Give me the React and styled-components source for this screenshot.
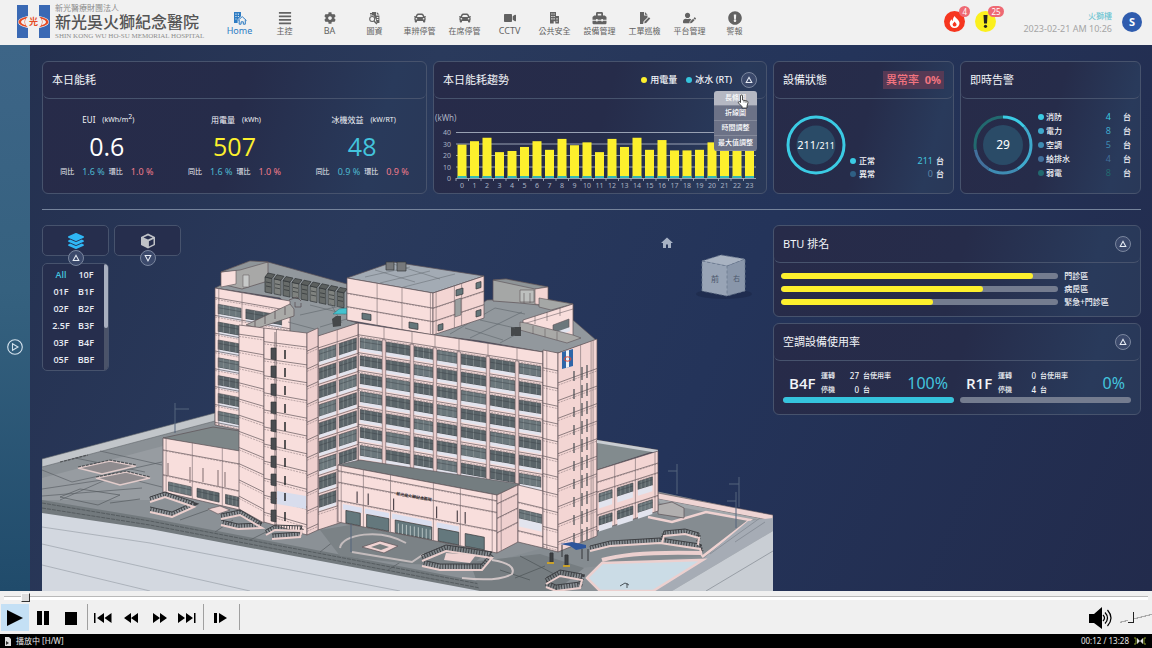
import React from 'react';
import styled, { createGlobalStyle } from 'styled-components';
import {
  FaAlignJustify, FaCog, FaCar, FaVideo, FaToolbox,
  FaUserEdit, FaExclamationCircle, FaLayerGroup,
} from 'react-icons/fa';

const GlobalStyle = createGlobalStyle`
* { box-sizing : border-box ; }
body {
  margin : 0 ;
  background : #26345a ;
  color : #f2f4f8 ;
  font-family : "Noto Sans", "Noto Sans CJK TC", sans-serif ;
  font-size : 8px ;
  line-height : 12px ;
}
button, select, input { font : inherit ; color : inherit ; }
button { border : 0 ; padding : 0 ; background : none ; cursor : pointer ; }
h1, h2, p, ul, dl, dd { margin : 0 ; padding : 0 ; font-weight : 400 ; }
ul { list-style : none ; }
svg { display : block ; }
`

const Page = styled.div`
display : flex ;
flex-direction : column ;
min-height : 100vh ;
`

/* ---------- top bar ---------- */

const TopBar = styled.header`
display : flex ;
align-items : center ;
height : 45px ;
padding : 0 10px 2px 17px ;
background : #f1f1f1 ;
color : #606060 ;
`

const Brand = styled.a`
display : flex ;
align-items : center ;
gap : 5px ;
width : 200px ;
color : inherit ;
text-decoration : none ;
white-space : nowrap ;
`

const BrandText = styled.div`
display : flex ;
flex-direction : column ;
`

const BrandSmall = styled.span`
font-size : 8px ;
line-height : 10px ;
color : #8d8d8d ;
`

const BrandName = styled.h1`
font-size : 16px ;
font-weight : 500 ;
line-height : 19px ;
color : #555 ;
`

const BrandEnglish = styled.span`
font-family : "Liberation Serif", serif ;
font-size : 7px ;
line-height : 8px ;
color : #8d8d8d ;
`

const Nav = styled.nav`
display : flex ;
flex : 1 ;
padding-top : 4px ;
`

const NavItem = styled.a`
display : flex ;
flex-direction : column ;
align-items : center ;
width : 45px ;
font-size : ${p => p.$latin ? '9px' : '8px'} ;
color : ${p => p.$active ? '#2d7cc4' : '#626262'} ;
text-decoration : none ;
white-space : nowrap ;
svg { height : 14px ; }
`

const UserArea = styled.div`
display : flex ;
align-items : center ;
gap : 10px ;
`

const AlertButton = styled.button`
position : relative ;
display : flex ;
align-items : center ;
justify-content : center ;
width : 21px ;
height : 21px ;
border-radius : 50% ;
background : ${p => p.$color} ;
`

const Badge = styled.span`
position : absolute ;
top : -5px ;
left : ${p => p.$wide ? '13px' : '15px'} ;
min-width : 11px ;
padding : 0 3px ;
border-radius : 6px ;
background : #ee6973 ;
color : #fff ;
font-size : 8px ;
line-height : 11px ;
`

const Clock = styled.div`
margin-left : 17px ;
text-align : right ;
font-size : 9px ;
line-height : 13px ;
color : #a5a5a5 ;
span { display : block ; font-size : 8px ; color : #5fc0cf ; }
`

const Avatar = styled.button`
width : 20px ;
height : 20px ;
border-radius : 50% ;
background : #2f5cae ;
color : #fff ;
font-size : 11px ;
font-weight : 700 ;
`

/* ---------- layout ---------- */

const Body = styled.div`
display : flex ;
flex : 1 ;
`

const Side = styled.aside`
display : flex ;
align-items : center ;
justify-content : center ;
width : 30px ;
padding-top : 58px ;
background : linear-gradient(180deg, #3d6587 0%, #35617f 45%, #204b6b 100%) ;
`

const Main = styled.main`
display : flex ;
flex-direction : column ;
flex : 1 ;
min-width : 0 ;
padding : 16px 11px 0 12px ;
background : linear-gradient(115deg, #24304f 0%, #2a3a5c 30%, #24345a 60%, #222b4c 100%) ;
`

const TopRow = styled.div`
display : grid ;
grid-template-columns : 385fr 334fr 181fr 181fr ;
gap : 6px ;
`

const Divider = styled.hr`
width : 100% ;
margin : 15px 0 15px ;
border : 0 ;
border-top : 1px solid #75839b ;
`

const LowerRow = styled.div`
display : grid ;
grid-template-columns : 731fr 368fr ;
flex : 1 ;
`

const RightColumn = styled.div`
display : flex ;
flex-direction : column ;
gap : 6px ;
`

const Card = styled.section`
display : flex ;
flex-direction : column ;
min-width : 0 ;
min-height : ${p => p.$short ? '92px' : '133px'} ;
border : 1px solid #47536d ;
border-radius : 6px ;
background : linear-gradient(105deg, #272b49 0%, #262c4a 50%, #293a5b 85%, #293858 100%) ;
`

const CardHead = styled.div`
display : flex ;
align-items : center ;
gap : 9px ;
height : 37px ;
padding : 0 9px ;
border-bottom : 1px solid #47536d ;
border-radius : 6px ;
`

const CardTitle = styled.h2`
flex : 1 ;
font-size : 11px ;
line-height : 16px ;
white-space : nowrap ;
`

const RoundButton = styled.button`
display : flex ;
align-items : center ;
justify-content : center ;
width : 16px ;
height : 16px ;
border : 1px solid #7a869e ;
border-radius : 50% ;
background : #3b496b ;
color : #e8edf5 ;
`

const Dot = styled.i`
width : 6px ;
height : 6px ;
border-radius : 50% ;
background : ${p => p.$color} ;
`

/* ---------- energy today ---------- */

const Stats = styled.div`
display : grid ;
grid-template-columns : repeat(3, 1fr) ;
flex : 1 ;
padding : 15px 0 0 ;
`

const Stat = styled.div`
display : flex ;
flex-direction : column ;
align-items : center ;
white-space : nowrap ;
`

const StatLabel = styled.p`
display : flex ;
gap : 7px ;
height : 13px ;
padding-left : 3px ;
font-size : 8px ;
span + span { font-size : 7px ; }
sup { font-size : 7px ; line-height : 0 ; }
`

const StatValue = styled.p`
font-family : "Open Sans", "Noto Sans", sans-serif ;
font-size : 25px ;
line-height : 39px ;
font-weight : 500 ;
color : ${p => p.$color} ;
`

const Ratios = styled.p`
display : flex ;
gap : 4px ;
`

const Ratio = styled.span`
display : flex ;
gap : 8px ;
font-size : 7px ;
b { font-weight : 400 ; font-size : 9px ; color : ${p => p.$up ? '#f17c8b' : '#4db9d0'} ; }
`

/* ---------- trend ---------- */

const LegendKey = styled.span`
display : flex ;
align-items : center ;
gap : 3px ;
font-size : 9px ;
font-weight : 500 ;
white-space : nowrap ;
`

const MenuAnchor = styled.div`
position : relative ;
z-index : 2 ;
`

const Menu = styled.ul`
position : absolute ;
top : 19px ;
right : 0 ;
width : 43px ;
border-radius : 3px ;
overflow : hidden ;
`

const MenuItem = styled.button`
display : block ;
width : 100% ;
height : 15px ;
border-bottom : 1px solid #858a9b ;
background : ${p => p.$active ? '#b5b8c3' : '#6c7287'} ;
color : #fff ;
font-size : 7px ;
font-weight : 500 ;
line-height : 14px ;
text-align : center ;
white-space : nowrap ;
`

const Pointer = styled.svg`
position : absolute ;
top : 22px ;
left : -4px ;
`

const ChartSvg = styled.svg`
width : 100% ;
`

/* ---------- rings ---------- */

const RateTag = styled.span`
padding : 1px 3px ;
background : #563a55 ;
color : #f2747f ;
font-size : 11px ;
font-weight : 500 ;
line-height : 16px ;
white-space : nowrap ;
b { margin-left : 3px ; }
`

const RingBody = styled.div`
display : flex ;
align-items : center ;
gap : ${p => p.$gap} ;
flex : 1 ;
padding : 0 9px 2px 12px ;
`

const Legend = styled.dl`
flex : 1 ;
align-self : ${p => p.$end ? 'flex-end' : 'center'} ;
padding-bottom : ${p => p.$end ? '11px' : '0'} ;
`

const LegendRow = styled.div`
display : grid ;
grid-template-columns : 6px 1fr auto auto ;
align-items : center ;
column-gap : ${p => p.$unitGap ? '2px' : '3px'} ;
height : ${p => p.$unitGap ? '14px' : '13px'} ;
font-size : 8px ;
font-weight : 500 ;
white-space : nowrap ;
dd { font-size : 9px ; color : ${p => p.$value} ; }
span { padding-left : ${p => p.$unitGap || '0'} ; }
`

/* ---------- BTU + usage ---------- */

const BtuList = styled.ul`
display : flex ;
flex-direction : column ;
gap : 1px ;
padding : 7px 7px ;
`

const BtuRow = styled.li`
display : grid ;
grid-template-columns : 278fr 69fr ;
align-items : center ;
gap : 6px ;
font-weight : 500 ;
white-space : nowrap ;
`

const Track = styled.div`
height : 6px ;
border-radius : 3px ;
background : #747c8f ;
overflow : hidden ;
`

const Fill = styled.div`
height : 100% ;
border-radius : 3px ;
background : ${p => p.$color} ;
`

const UsageRow = styled.div`
display : grid ;
grid-template-columns : 1fr 1fr ;
gap : 6px ;
padding : 7px 9px 10px ;
`

const UsageInfo = styled.div`
display : flex ;
align-items : center ;
height : 29px ;
padding : 0 6px ;
white-space : nowrap ;
`

const FloorName = styled.strong`
width : 32px ;
font-family : "Open Sans", "Noto Sans", sans-serif ;
font-size : 15px ;
font-weight : 600 ;
`

const Counts = styled.div`
display : grid ;
grid-template-columns : 22px 12px auto ;
column-gap : 4px ;
flex : 1 ;
font-size : 7px ;
font-weight : 500 ;
line-height : 14px ;
span:nth-child(3n+2) { text-align : right ; font-size : 8px ; }
`

const Percent = styled.span`
font-size : 16px ;
color : #43c4dd ;
`

/* ---------- model viewer ---------- */

const Viewer = styled.div`
display : grid ;
min-width : 0 ;
> * { grid-area : 1 / 1 ; }
`

const SceneSvg = styled.svg`
align-self : end ;
width : 100% ;
`

const Tools = styled.div`
display : flex ;
align-items : flex-start ;
align-self : start ;
justify-self : start ;
z-index : 1 ;
gap : 5px ;
`

const ToolGroup = styled.div`
display : flex ;
flex-direction : column ;
align-items : center ;
width : 67px ;
`

const ToolButton = styled.button`
display : flex ;
align-items : center ;
justify-content : center ;
width : 100% ;
height : 31px ;
border : 1px solid #47536d ;
border-radius : 5px ;
background : #262e4d ;
color : ${p => p.$color} ;
`

const Handle = styled(RoundButton)`
margin : -6px 0 -3px ;
z-index : 1 ;
`

const FloorPanel = styled.div`
display : flex ;
width : 100% ;
border : 1px solid #47536d ;
border-radius : 5px ;
background : #262e4d ;
overflow : hidden ;
`

const FloorGrid = styled.div`
display : grid ;
grid-template-columns : 25px 25px ;
justify-content : center ;
flex : 1 ;
padding : 2px 0 2px ;
`

const FloorButton = styled.button`
height : 17px ;
font-family : "Open Sans", "Noto Sans", sans-serif ;
font-size : 9px ;
font-weight : 600 ;
color : ${p => p.$active ? '#43c4dd' : '#e8ebf2'} ;
`

const ScrollTrack = styled.div`
width : 4px ;
background : #4b5369 ;
`

const ScrollThumb = styled.div`
height : 60% ;
border-radius : 2px ;
background : #a9b0c0 ;
`

/* ---------- player ---------- */

const Player = styled.footer`
background : #f0f0f0 ;
color : #000 ;
`

const Seek = styled.input`
appearance : none ;
display : block ;
width : calc(100% - 8px) ;
height : 13px ;
margin : 0 4px ;
background : linear-gradient(#b9b9b9, #b9b9b9) 0 5px / 100% 1px no-repeat, linear-gradient(#fff, #fff) 0 6px / 100% 3px no-repeat ;
&::-webkit-slider-thumb {
  appearance : none ;
  width : 9px ;
  height : 9px ;
  border : 1px solid #f8f8f8 ;
  border-right-color : #333 ;
  border-bottom-color : #333 ;
  background : #ddd ;
}
`

const Controls = styled.div`
display : flex ;
align-items : flex-start ;
height : 30px ;
padding-left : 1px ;
`

const ControlButton = styled.button`
display : flex ;
align-items : center ;
justify-content : center ;
width : ${p => p.$wide ? '32px' : '28px'} ;
height : 27px ;
background : ${p => p.$active ? '#c4e0f5' : 'transparent'} ;
`

const Separator = styled.span`
width : 1px ;
height : 26px ;
margin : 0 1px 0 2px ;
background : #a0a0a0 ;
`

const Volume = styled.div`
display : flex ;
align-items : center ;
gap : 8px ;
height : 27px ;
margin-left : auto ;
`

const VolumeSlider = styled.input`
appearance : none ;
width : 32px ;
height : 14px ;
margin : 0 ;
background : linear-gradient(166deg, transparent 48%, #aaa 49%, #aaa 54%, transparent 55%) ;
&::-webkit-slider-thumb {
  appearance : none ;
  width : 6px ;
  height : 11px ;
  border-right : 1px solid #222 ;
  border-bottom : 1px solid #222 ;
  background : #f0f0f0 ;
}
`

const StatusBar = styled.div`
display : flex ;
align-items : center ;
gap : 4px ;
height : 14px ;
padding : 0 5px 0 4px ;
background : #000 ;
color : #e6e6e6 ;
font-size : 8px ;
span:nth-of-type(1) { flex : 1 ; }
`

/* ---------- icons ---------- */

const Triangle = ({ down, size = 8 }) => (
  <svg width={size} height={size} viewBox="0 0 10 10" fill="none" stroke="currentColor" strokeWidth="1.3">
    <path d={down ? 'M1.5 2h7L5 8.6z' : 'M1.5 8h7L5 1.6z'} />
  </svg>
)

const HomeIcon = () => (
  <svg width="14" height="14" viewBox="0 0 14 14" fill="currentColor">
    <path fillRule="evenodd" d="M1 1h7v4.2L4.6 8.4V12H1zM2.4 2.6v1.1h1.1V2.6zm2.4 0v1.1h1.1V2.6zM2.4 5v1.1h1.1V5zm2.4 0v1.1h1.1V5zM2.4 7.4v1.1h1.1V7.4z" />
    <path d="M4.8 9.6L9.2 5.6l4.3 4M6.2 9v4.2h1.9v-2.4h2.2v2.4h2V9" fill="none" stroke="currentColor" strokeWidth="1" />
  </svg>
)

const DrawingIcon = () => (
  <svg width="13" height="14" viewBox="0 0 13 14" fill="currentColor">
    <path fillRule="evenodd" d="M4 1h4v3.4h3.4V12H8.6L7.8 8.3 5.6 4.6 4 4.4zM8.8 1l2.6 2.6H8.8zM8.8 6v1h1.6V6zm0 2v1h1.6V8z" />
    <circle cx="4.2" cy="8" r="2.5" fill="none" stroke="currentColor" strokeWidth="1.1" />
    <path d="M6 10l3 3" stroke="currentColor" strokeWidth="1.5" />
    <path d="M2 2.5h2.6M2 4h2" stroke="currentColor" />
  </svg>
)

const OfficeIcon = () => (
  <svg width="11" height="14" viewBox="0 0 11 14" fill="currentColor">
    <path fillRule="evenodd" d="M1 1h6v4h3v7.500H6.300V10.200H4.700v2.300H1zM2.300 2.500v1.100h1.200V2.500zm2.200 0v1.100h1.200V2.500zM2.300 4.900V6h1.200V4.900zm2.200 0V6h1.200V4.900zM2.300 7.300v1.100h1.200V7.300zm2.200 0v1.100h1.200V7.300zm2.900 0v1.100h1.200V7.300zm0 2.400v1.100h1.200V9.700z" />
  </svg>
)

const WorkOrderIcon = () => (
  <svg width="12" height="14" viewBox="0 0 12 14" fill="currentColor">
    <path d="M1 1h4v3.6h3.5v1.8L4.6 10.3 4.1 13H1zM5.9 1l2.7 2.7H5.9z" />
    <path d="M9.9 6.2l1.4 1.4-4.2 4.3-1.8.4.4-1.9z" />
  </svg>
)

const CubeIcon = () => (
  <svg width="16" height="16" viewBox="0 0 16 16">
    <path d="M8 .5L15 4v8l-7 3.500L1 12V4z" fill="#bfc2c7" />
    <path d="M8.900 8.200L13.500 6v5.300l-4.600 2.300z" fill="#262e4d" />
    <path d="M8 2.400L12.500 4.500 8 6.600 3.500 4.500z" fill="#262e4d" />
  </svg>
)

const FlameIcon = () => (
  <svg width="13" height="14" viewBox="0 0 13 14">
    <path d="M6.8 1c.3 2 4.7 3.700 4.700 7.300A4.800 4.800 0 0 1 6.600 13 4.800 4.800 0 0 1 1.700 8.300c0-1.900 1-3.100 2-4 .1 1 .5 1.500 1 1.800C4.800 4 5.300 2.200 6.800 1z" fill="#fff" />
    <path d="M6.600 6.400c.5 1.200 2 1.700 2 3.200a2 2 0 0 1-4 0c0-1.500 1.600-1.900 2-3.200z" fill="#f6361f" />
  </svg>
)

const Logo = () => (
  <svg width="33" height="33" viewBox="0 0 33 33">
    <path d="M0 0h11v33H0zM22 0h11v33H22z" fill="#3a69b4" />
    <ellipse cx="16.500" cy="17" rx="15.500" ry="6.500" fill="#f1f1f1" />
    <path d="M11 11.800C5 12.500 1.500 15 1.500 17s3.500 4.500 9.500 5.200C7 20 7 14 11 11.800zM22 11.800c6 .7 9.500 3.200 9.500 5.200s-3.500 4.500-9.500 5.200c4-2.200 4-8.200 0-10.400z" fill="#e54b25" />
    <path d="M8.500 13.800C5.500 14.500 4 16 4 17s1.500 2.500 4.500 3.200c-1.300-2-1.300-4.400 0-6.400zM24.500 13.800c3 .7 4.500 2.200 4.500 3.200s-1.500 2.500-4.500 3.200c1.300-2 1.300-4.400 0-6.400z" fill="#f1f1f1" />
    <text x="16.500" y="20" textAnchor="middle" fontSize="9" fontWeight="700" fill="#e54b25">光</text>
  </svg>
)

const NAV = [
  { label: 'Home', icon: <HomeIcon />, latin: true },
  { label: '主控', icon: <FaAlignJustify size={14} /> },
  { label: 'BA', icon: <FaCog size={12} />, latin: true },
  { label: '圖資', icon: <DrawingIcon /> },
  { label: '車辨停管', icon: <FaCar size={12} /> },
  { label: '在席停管', icon: <FaCar size={12} /> },
  { label: 'CCTV', icon: <FaVideo size={12} />, latin: true },
  { label: '公共安全', icon: <OfficeIcon /> },
  { label: '設備管理', icon: <FaToolbox size={15} /> },
  { label: '工單巡檢', icon: <WorkOrderIcon /> },
  { label: '平台管理', icon: <FaUserEdit size={13} /> },
  { label: '警報', icon: <FaExclamationCircle size={14} /> },
]

const STATS = [
  { name: 'EUI', unit: <>(kWh/m<sup>2</sup>)</>, value: '0.6', color: '#fff', yoy: '1.6 %', mom: '1.0 %' },
  { name: '用電量', unit: '(kWh)', value: '507', color: '#fdf02d', yoy: '1.6 %', mom: '1.0 %' },
  { name: '冰機效益', unit: '(kW/RT)', value: '48', color: '#43c4dd', yoy: '0.9 %', mom: '0.9 %' },
]

const USAGE = [29, 32, 35, 22.5, 23.5, 27, 32, 24.5, 34, 28.5, 31, 22.5, 34, 27, 35, 24.5, 33, 24, 24, 24.5, 31, 33, 29, 30]

const ALERTS = [
  { name: '消防', count: 4, color: '#3bcbe4' },
  { name: '電力', count: 8, color: '#3fa9cc' },
  { name: '空調', count: 5, color: '#3f8cb3' },
  { name: '給排水', count: 4, color: '#42709c' },
  { name: '弱電', count: 8, color: '#22696f' },
]

const BTU = [
  { name: '門診區', value: 91 },
  { name: '病房區', value: 73 },
  { name: '緊急+門診區', value: 55 },
]

const FLOORS = ['All', '10F', '01F', 'B1F', '02F', 'B2F', '2.5F', 'B3F', '03F', 'B4F', '05F', 'BBF']

const Trend = () => (
  <ChartSvg viewBox="0 0 332 94" fontSize="7" fill="#aab2c3" role="img" aria-label="本日能耗趨勢">
    <text x="1" y="22" fontSize="8">(kWh)</text>
    {[40, 30, 20, 10, 0].map((n, i) => (
      <g key={n}>
        <path d={`M22 ${33.500 + i * 11.500}H322`} stroke="#98a1b3" strokeWidth="1" />
        <text x="17" y={36 + i * 11.500} textAnchor="end">{n}</text>
      </g>
    ))}
    {USAGE.map((v, i) => (
      <g key={i}>
        <rect x={23.500 + i * 12.500} y={79 - v * 1.150} width="9" height={v * 1.150} fill="#fdf02d" />
        <rect x={23.500 + i * 12.500} y="77" width="9" height="2" fill="#35b9b5" />
        <path d={`M${22 + i * 12.500} 79v3`} stroke="#98a1b3" />
        <text x={28 + i * 12.500} y="89" textAnchor="middle">{i}</text>
      </g>
    ))}
  </ChartSvg>
)

const HandPointer = () => (
  <Pointer width="12" height="15" viewBox="0 0 12 15">
    <path d="M3.500 8.500V2a1 1 0 0 1 2 0v4l4.500 1c1 .3 1 1 .9 2L10 12v2H5v-1.500L1.500 9c-.6-1 .6-1.700 1.200-1.200z" fill="#fff" stroke="#222" strokeWidth=".8" />
    <path d="M7 6.500v2M9 7v2" stroke="#222" strokeWidth=".6" />
  </Pointer>
)

const AlertRing = () => {
  const total = ALERTS.reduce((sum, a) => sum + a.count, 0)
  let start = 0
  return (
    <svg width="60" height="60" viewBox="0 0 60 60">
      <circle cx="30" cy="30" r="20" fill="#2a4b67" />
      {ALERTS.map(a => {
        const from = start
        start += a.count / total * 100
        return (
          <circle key={a.name} cx="30" cy="30" r="28" fill="none" stroke={a.color} strokeWidth="3"
            pathLength="100" strokeDasharray={`${a.count / total * 100} 100`} strokeDashoffset={-from}
            transform="rotate(-90 30 30)" />
        )
      })}
      <text x="30" y="34" textAnchor="middle" fontSize="12" fill="#fff">{total}</text>
    </svg>
  )
}

/* ---------- building drawing ---------- */

const INK = '#5b5156'
const PINK = '#f8dedc'
const PINK_SIDE = '#f3d5d3'

// point inside a four-cornered wall: u runs left to right, v top to bottom
const at = (q, u, v) => {
  const [a, b, c, d] = q
  const x = (a[0] * (1 - u) + b[0] * u) * (1 - v) + (d[0] * (1 - u) + c[0] * u) * v
  const y = (a[1] * (1 - u) + b[1] * u) * (1 - v) + (d[1] * (1 - u) + c[1] * u) * v
  return `${x.toFixed(1)} ${y.toFixed(1)}`
}

const box = (q, u1, v1, u2, v2) => `M${at(q, u1, v1)}L${at(q, u2, v1)}L${at(q, u2, v2)}L${at(q, u1, v2)}Z`
const line = (q, u1, v1, u2, v2) => `M${at(q, u1, v1)}L${at(q, u2, v2)}`
const series = (start, step, count) => Array.from({ length: count }, (_, i) => start + step * i)

const Wall = ({ q, fill = PINK, rows = [], bays = [], high = 0.07, pad = 0.012, ledge = 0.022, h = [], v = [] }) => (
  <g>
    <path d={box(q, 0, 0, 1, 1)} fill={fill} stroke={INK} strokeWidth=".7" />
    {rows.map((r, k) => bays.map(([a, b], i) => (
      <g key={`${k}-${i}`}>
        <path d={box(q, a + pad, r, b - pad, r + high)} fill={(i + k) % 3 ? '#5a6469' : '#6b777c'} stroke="#3a3f44" strokeWidth=".6" />
        <path d={box(q, a + pad, r + high, b - pad, r + high + ledge)} fill="#e2e4ee" />
        <path d={[0.25, 0.5, 0.75].map(t => line(q, a + (b - a) * t, r, a + (b - a) * t, r + high)).join('')} stroke="#8f9799" strokeWidth=".6" />
        <path d={line(q, a + pad, r + high * 0.35, b - pad, r + high * 0.35)} stroke="#353a3f" strokeWidth=".4" />
      </g>
    )))}
    <path d={h.map(t => line(q, 0, t, 1, t)).join('')} stroke="#4a4146" strokeWidth=".6" fill="none" />
    <path d={h.map(t => line(q, 0, t + 0.012, 1, t + 0.012)).join('')} stroke="#7c6c70" strokeWidth=".5" strokeDasharray="2 1" fill="none" />
    <path d={v.map(t => line(q, t, 0, t, 1)).join('')} stroke="#75686c" strokeWidth=".6" fill="none" />
  </g>
)

const MAIN = [[358, 323], [543, 352], [543, 497], [358, 464]]
const MAIN_COLS = [358, 384, 412, 435, 459, 488, 517, 543].map(x => (x - 358) / 185)
const RECESS = [[318, 336], [358, 323], [358, 517], [318, 530]]
const PODIUM = [[338, 465], [497, 495], [497, 553], [338, 522]]
const bays = cols => cols.slice(1).map((c, i) => [cols[i], c])

// railing along a poly-line, posts every few pixels
const Fence = ({ pts, tall = 5 }) => (
  <g stroke="#3e4044" fill="none">
    <polyline points={pts} strokeWidth="1" />
    <polyline points={pts} strokeWidth={tall} strokeDasharray=".9 1.8" transform={`translate(0 ${tall / 2})`} />
    <polyline points={pts} stroke="#ecd0ce" strokeWidth="2" transform={`translate(0 ${tall + 1})`} />
  </g>
)

const Scene = () => (
  <SceneSvg viewBox="42 225 731 366" role="img" aria-label="3D 模型">
    {/* ground and retaining slab */}
    <path d="M42 460L215 414L430 440L660 492L773 516V591H42z" fill="#8b9196" />
    <path d="M42 459L215 413V421L42 467z" fill="#c2c6ca" stroke="#63686d" strokeWidth=".6" />
    <path d="M42 478L163 446V500L42 500z" fill="#979ca1" />
    <path d="M42 470l30 12 90-20M42 489l80-12 40 10M42 496l100-8M75 458l70 14M100 451l62 14M60 500l50-22" stroke="#5c6267" strokeWidth=".7" fill="none" />
    <path d="M78 468l32-7 26 5-34 8zM96 478l30-6 24 6-30 7z" fill="#8f8b8e" stroke="#e2cccb" strokeWidth="1.500" />
    <path d="M78 467l32-7 26 5M96 477l30-6 24 6M60 462l28-7" stroke="#4f5256" strokeWidth="1.200" fill="none" strokeDasharray="3 1" />
    <path d="M42 500L150 518L497 585V591H42z" fill="#72797d" />
    <path d="M60 497l20-8 40 6-22 10zM110 503l30-4M180 520l28-10M215 532l18-12M250 540l16-8M320 552l18-14 20-4M388 570l22-14" stroke="#565c60" strokeWidth=".7" fill="none" />
    <path d="M320 530l60-10 110 30-20 16-60-2-70-8z" fill="#7b8286" />
    <path d="M42 503L150 521L490 586M42 508L150 525L480 588" stroke="#4e5458" strokeWidth=".8" strokeDasharray="4 1" fill="none" />
    <path d="M42 513L150 529L480 591H42z" fill="#d3d8e0" />
    <path d="M42 527L150 543L400 591M42 544L250 591M42 565L150 591" fill="none" stroke="#9ba2ab" strokeWidth=".7" />
    {/* right hand plaza */}
    <path d="M590 535L617 522L658 514L678 523L706 512L750 520L701 556L560 570L500 560z" fill="#858c91" />
    <path d="M658 493L773 515V521L658 499z" fill="#efd5d4" stroke={INK} strokeWidth=".6" />
    <path d="M658 499L773 521L750 519L706 512L660 503z" fill="#a3a8ac" />
    <path d="M648 517l24 5 34-10 44 8-48 37" fill="none" stroke="#efd2d1" strokeWidth="2.500" />
    <path d="M658 505l14-3 12 6v10l-26-4z" fill="#b1afaf" stroke={INK} strokeWidth=".7" />
    <path d="M748 521L773 518V531L672 591H653L703 559z" fill="#a6acb5" />
    <path d="M773 531V591H672z" fill="#c9ced4" />
    <path d="M773 551L706 591M760 518l-50 36M765 522l-30 20" stroke="#777e86" strokeWidth=".6" fill="none" />
    <path d="M587 578L602 563L703 560L653 591H600z" fill="#cbdce6" stroke="#ecd0cf" strokeWidth="2.500" />
    <path d="M620 586l5-3 4 2M627 583v5" stroke="#4c555b" strokeWidth="1" fill="none" />
    <path d="M470 562l70-8 44 14-28 23h-76z" fill="#767d81" />
    <path d="M500 570l30 10M515 578l30-12M520 556l34 18" stroke="#4e5458" strokeWidth=".7" fill="none" />

    {/* rear left wing and its roof */}
    <path d="M215 288L268 262L347 284V320L358 323L318 337L264 330L290 307L280 298z" fill="#92989d" stroke={INK} strokeWidth=".7" />
    <path d="M221 272L250 261L268 262V281L242 289L221 284z" fill="#a8a8a7" stroke={INK} strokeWidth=".7" />
    <path d="M221 272L236 270V284L221 287z" fill={PINK} stroke={INK} strokeWidth=".6" />
    <path d="M221 272L250 261L268 262L240 270z" fill="#8f9599" stroke={INK} strokeWidth=".6" />
    <path d="M243 275h6v12h-6z" fill="#c7c9c9" stroke={INK} strokeWidth=".5" />
    <Wall q={[[215, 288], [290, 301], [290, 440], [215, 425]]} rows={series(0.115, 0.130, 7)} bays={[[0.03, 0.36], [0.40, 0.9]]} h={series(0.07, 0.130, 8)} v={[0.05, 0.36]} />
    <g stroke="#2f3336" strokeWidth=".7">
      {series(0, 1, 9).map(i => (
        <g key={i}>
          <path d={`M${265 + i * 9} ${277 + i * 1.800}l7 1.500v15l-7-1.500z`} fill={i % 2 ? '#7f827f' : '#686c6a'} />
          <path d={`M${265 + i * 9} ${277 + i * 1.800}l3-4 7 1.500-3 4zM${266 + i * 9} ${282 + i * 1.800}l5 1M${266 + i * 9} ${286 + i * 1.800}l5 1`} fill="#5b5f5e" />
        </g>
      ))}
    </g>
    <path d="M246 325L290 304L294 309L294 316L258 328z" fill="#aaaaa8" stroke={INK} strokeWidth=".7" />
    <path d="M255 321v6M265 316v8M275 311v8M285 307v8M295 302v5h6v-4M289 300l8-3 4 4" stroke={INK} strokeWidth=".8" fill="none" />
    <path d="M300 315l45-10M320 327l30-9M310 305l35 9M288 322l30 8M330 303l12 20" stroke="#60676b" strokeWidth=".6" fill="none" />
    <path d="M333 314l6-5 8-1v6z" fill="#45c2cf" stroke="#26777f" strokeWidth=".5" />
    <path d="M332 319l4-3h5v10l-8 1z" fill="#45484a" />

    {/* rear right block */}
    <path d="M433 335L487 300L540 298L573 304V320L596 340L558 353L543 352L480 341z" fill="#92989d" stroke={INK} strokeWidth=".7" />
    <path d="M493 280L506 279L548 287V306L520 303L493 301z" fill="#a5a7a6" stroke={INK} strokeWidth=".7" />
    <path d="M493 280L506 279L548 287L535 289z" fill="#8e9497" stroke={INK} strokeWidth=".6" />
    <path d="M535 289L548 287V306L535 304z" fill={PINK_SIDE} stroke={INK} strokeWidth=".6" />
    <path d="M520 290h14v12h-14zM524 293v10M530 293v10" fill="#bdbfbe" stroke={INK} strokeWidth=".6" />
    <path d="M539 298L573 304L551 310L539 307z" fill="#a5a7a6" stroke={INK} strokeWidth=".6" />
    <path d="M523 320L573 304V337L552 336L523 326z" fill={PINK} stroke={INK} strokeWidth=".7" />
    <path d="M523 324L573 309M535 316v8M547 312v9M560 308v8" stroke={INK} strokeWidth=".5" fill="none" />
    <path d="M553 325l16-6v9l-16 6z" fill="#6b777c" stroke={INK} strokeWidth=".6" />
    <path d="M556 332l14-5v4l-12 5z" fill="#e2e4ee" />
    <path d="M520 322l6 1 47 12 8 3-14 5-47-13z" fill="#a9a9a7" stroke={INK} strokeWidth=".6" />
    <path d="M533 326v8M545 329v8M557 332v8" stroke={INK} strokeWidth=".5" />
    <path d="M511 327h10v9h-10z" fill="#45484a" />
    <path d="M450 334l45-26M470 338l52-26M500 343l15-8M480 320l35 8M465 328l38 12M495 308l30 6" stroke="#60676b" strokeWidth=".6" fill="none" />

    {/* penthouse */}
    <path d="M347 278L393 262L484 276L433 293z" fill="#a3abb4" stroke={INK} strokeWidth=".7" />
    <path d="M365 277l45-10M380 283l50-12M400 288l55-14M390 263l50 16M375 270l40 12" stroke="#6d747a" strokeWidth=".6" fill="none" />
    <path d="M386 262h8v8h-8zM397 262h9v9h-9z" fill="#76787a" stroke="#34373a" strokeWidth=".7" />
    <Wall q={[[347, 278], [433, 293], [433, 335], [347, 320]]} h={[0.36, 0.68]} v={[0.35, 0.64, 0.97]} />
    <Wall q={[[433, 293], [484, 276], [484, 318], [433, 335]]} fill={PINK_SIDE} h={[0.36, 0.68]} v={[0.06, 0.42, 0.56]} />
    <path d="M362 313l9 1.500v6l-9-1.500zM409 322l9 1.500v6l-9-1.500zM456 290l7-2v6l-7 2zM476 283l5-1.500v6l-5 1.500zM476 311l5-1.500v6l-5 1.500zM438 325l5-1.500v6l-5 1.500z" fill="#65777b" stroke="#34373a" strokeWidth=".7" />
    <path d="M455 300l6-2v17l-6 2z" fill="#9ba0a0" stroke={INK} strokeWidth=".5" />

    {/* main block */}
    <Wall q={MAIN} rows={series(0.103, 0.127, 7)} bays={bays(MAIN_COLS)} high={0.073} h={series(0.083, 0.127, 8)} v={MAIN_COLS} />
    <path d={MAIN_COLS.slice(1, -1).map(u => box(MAIN, u - 0.009, 0.09, u + 0.009, 1)).join('')} fill="#e9cbca" stroke={INK} strokeWidth=".5" />
    <Wall q={RECESS} fill={PINK_SIDE} rows={series(0.075, 0.094, 9)} bays={[[0.02, 0.46], [0.52, 0.97]]} high={0.06} h={series(0.062, 0.094, 10)} v={[0.48]} ledge={0.017} />

    {/* left low wing */}
    <path d="M163 438L213 427L240 431V452z" fill="#7d8688" stroke={INK} strokeWidth=".7" />
    <Wall q={[[163, 438], [240, 451], [240, 510], [163, 492]]} rows={[0.79]} bays={[[0.06, 0.38], [0.43, 0.74], [0.8, 1]]} high={0.16} ledge={0} h={[0.22, 0.68]} v={[0.04, 0.38, 0.77]} />
    <path d="M168 463v13M190 467v16M203 468v14M218 470v16M225 472v15" stroke="#9c8789" strokeWidth="1.300" />

    {/* left tower */}
    <Wall q={[[239, 325], [264, 328], [264, 523], [239, 509]]} h={series(0.05, 0.088, 11)} />
    <Wall q={[[264, 328], [307, 333], [307, 535], [264, 522]]} h={series(0.07, 0.088, 11)} v={[0.29]} />
    <path d="M275 332v195" stroke={INK} strokeWidth=".8" />
    {series(349, 18, 10).map(y => (
      <g key={y}>
        <path d={`M271 ${y - 1}h5v12l-5-1z`} fill="#4a4d51" stroke="#2f3336" strokeWidth=".6" />
        <path d={`M285 ${y + 1}v9`} stroke="#24272a" strokeWidth="1.500" />
      </g>
    ))}
    <path d="M277 491L306 496V509L277 504z" fill="#d8dded" />
    <path d="M285 493v8" stroke="#24272a" strokeWidth="1.500" />
    <Wall q={[[307, 333], [318, 328], [318, 530], [307, 535]]} fill="#efd0cf" h={series(0.09, 0.088, 11)} />

    {/* podium */}
    <path d="M338 465L360 460L520 484L497 495z" fill="#747d80" stroke={INK} strokeWidth=".6" />
    <Wall q={PODIUM} h={[0.1, 0.3, 0.62]} v={[0.02, 0.16, 0.33, 0.6, 0.77, 0.97]} />
    <path d={[[0.03, 0.15], [0.17, 0.32], [0.34, 0.59], [0.62, 0.76]].map(([a, b]) => box(PODIUM, a, 0.67, b, 0.76)).join('')} fill="#dadff0" />
    <path d={[[0.05, 0.14], [0.18, 0.32], [0.36, 0.59], [0.63, 0.76], [0.8, 0.92]].map(([a, b]) => box(PODIUM, a, 0.77, b, 0.99)).join('')} fill="#64787d" stroke="#34373a" strokeWidth=".7" />
    <path d={series(0.38, 0.025, 9).map(u => line(PODIUM, u, 0.82, u, 0.99)).join('')} stroke="#c8d2d2" strokeWidth=".8" />
    <path d={[0.12, 0.19, 0.35, 0.62, 0.75, 0.8].map(u => line(PODIUM, u, 0.4, u, 0.6)).join('')} stroke="#51474d" strokeWidth="1.200" />
    <text x="396" y="495" fontSize="4" fontWeight="700" fill="#302b2e" transform="rotate(10 396 495)">新光吳火獅紀念醫院</text>
    <Wall q={[[497, 495], [518, 485], [518, 542], [497, 553]]} fill="#efd0cf" h={[0.15, 0.4, 0.65]} v={[0.2]} />
    <Wall q={[[518, 485], [543, 491], [543, 548], [518, 542]]} rows={[0.42]} bays={[[0.04, 0.96]]} high={0.16} ledge={0.14} h={[0.3, 0.8]} />

    {/* right tower */}
    <Wall q={[[543, 350], [558, 353], [558, 552], [543, 548]]} h={series(0.09, 0.089, 11)} v={[0.25]} />
    <Wall q={[[558, 353], [597, 339], [597, 536], [558, 552]]} fill={PINK_SIDE} h={series(0.15, 0.089, 10)} v={[0.58, 0.85, 0.9]} />
    {series(371, 18, 10).map(y => (
      <path key={y} d={`M574 ${y}v10M582 ${y - 4}v13M587 ${y - 6}v13`} stroke="#4a4e52" strokeWidth="1.200" />
    ))}
    <path d="M562 352L573 349V366L562 369z" fill="#2f66a8" />
    <path d="M566 351l3-1v17l-3 1z" fill="#eef1f6" />
    <ellipse cx="567.500" cy="359" rx="3.500" ry="2.200" fill="none" stroke="#d84b3a" />

    {/* right low wing */}
    <path d="M597 440L658 450L597 470z" fill="#828b8e" stroke={INK} strokeWidth=".7" />
    <path d="M597 440L658 450V453L597 443z" fill="#c9cdd2" />
    <Wall q={[[597, 470], [658, 451], [658, 511], [597, 531]]} fill={PINK_SIDE} rows={[0.4, 0.78]} bays={[[0.02, 0.26], [0.32, 0.6], [0.66, 0.92]]} high={0.14} ledge={0.1} h={[0.2, 0.36, 0.74]} v={[0.29, 0.63, 0.95]} />

    {/* fences, planters, lamps */}
    <Fence pts="150,497 165,492 194,502 172,512 150,507" tall={4} />
    <Fence pts="221,514 240,510 262,523 238,524 221,520" tall={4} />
    <Fence pts="266,530 275,525 302,526 300,532 272,534" tall={4} />
    <path d="M208 509l12-3 10 4-12 4z" fill="#f0d3d2" stroke={INK} strokeWidth=".6" />
    <path d="M340 548c2-14 40-20 66-5M352 552l60 10 12-8" fill="none" stroke="#c4bcbd" strokeWidth="2" />
    <path d="M362 547l18-6 18 5-14 7z" fill="#f0d3d2" stroke={INK} strokeWidth=".7" />
    <path d="M371 547l9-3 9 3-8 3z" fill="#7a7f80" />
    <Fence pts="422,555 446,545 492,552 482,564 440,564 422,560" />
    <path d="M446 553l30 2-6 8-26-3z" fill="#f0d3d2" />
    <path d="M492 560q25 4 20 14-14 8-50 4" fill="none" stroke="#cfc4c5" strokeWidth="2" />
    <Fence pts="590,546 610,541 660,538 700,544 702,551" tall={4} />
    <Fence pts="662,538 664,531 685,529 699,533 698,540" tall={4} />
    <path d="M602 560q30-9 100-7" stroke="#ecd0cf" strokeWidth="4" fill="none" />
    <Fence pts="546,578 560,570 582,574 580,582 556,585 546,581" />
    <path d="M560 544l12-2 14 3v3l-10 2-6-4z" fill="#2d559c" />
    <path d="M562 545v12M582 549v10M588 549v12M550 553h3v9h-3zM565 555h3v10h-3z" stroke="#34373a" strokeWidth="1" fill="#3d4042" />
    <path d="M547 563h7M563 566h7" stroke="#c9a12a" strokeWidth="2" />
    <path d="M175 403v30M175 409h14M677 464v30M677 471h-9M739 477v30M739 484h-10M736 492v36M736 501h-9M351 524v28" stroke="#55657d" strokeWidth="1" fill="none" />

    {/* view cube */}
    <path d="M661 243l6-5.500 6 5.500h-2v5h-3v-3.500h-2v3.500h-3v-5z" fill="#a7b2c4" />
    <ellipse cx="724" cy="294" rx="28" ry="5" fill="#1d2848" opacity=".6" />
    <path d="M702 261L721 255L745 259L727 266z" fill="#a9b3c2" />
    <path d="M702 261L727 266V296L702 291z" fill="#98a4b6" />
    <path d="M727 266L745 259V291L727 296z" fill="#8996aa" />
    <path d="M702 261L727 266V296M727 266L745 259M702 261L721 255L745 259V291L727 296L702 291z" fill="none" stroke="#6b788e" strokeWidth=".8" strokeDasharray="3 2" />
    <text x="711" y="282" fontSize="8" fill="#4b566b">前</text>
    <text x="733" y="281" fontSize="7" fill="#4b566b">右</text>
  </SceneSvg>
)

const TransportIcon = ({ d, w = 18 }) => (
  <svg width={w} height="18" viewBox={`0 0 ${w} 18`}><path d={d} fill="currentColor" /></svg>
)

const App = () => {
  return (
    <Page>
      <GlobalStyle />
      <TopBar>
        <Brand href="#">
          <Logo />
          <BrandText>
            <BrandSmall>新光醫療財團法人</BrandSmall>
            <BrandName>新光吳火獅紀念醫院</BrandName>
            <BrandEnglish>SHIN KONG WU HO-SU MEMORIAL HOSPITAL</BrandEnglish>
          </BrandText>
        </Brand>
        <Nav>
          {NAV.map((n, i) => (
            <NavItem key={n.label} href="#" $active={i === 0} $latin={n.latin}>{n.icon}{n.label}</NavItem>
          ))}
        </Nav>
        <UserArea>
          <AlertButton $color="#f6361f" aria-label="火警"><FlameIcon /><Badge>4</Badge></AlertButton>
          <AlertButton $color="#fbf01e" aria-label="警告">
            <svg width="5" height="13" viewBox="0 0 5 13"><path d="M.5 0h4L4 8.500H1z" fill="#222" /><circle cx="2.500" cy="11.300" r="1.600" fill="#222" /></svg>
            <Badge $wide>25</Badge>
          </AlertButton>
          <Clock><span>火獅樓</span>2023-02-21 AM 10:26</Clock>
          <Avatar>S</Avatar>
        </UserArea>
      </TopBar>

      <Body>
        <Side>
          <button aria-label="展開">
            <svg width="16" height="16" viewBox="0 0 16 16" fill="none" stroke="#d5e3ee" strokeWidth="1.100">
              <circle cx="8" cy="8" r="7.300" /><path d="M5.500 4.800v6.400L11 8z" />
            </svg>
          </button>
        </Side>
        <Main>
          <TopRow>
            <Card>
              <CardHead><CardTitle>本日能耗</CardTitle></CardHead>
              <Stats>
                {STATS.map(s => (
                  <Stat key={s.name}>
                    <StatLabel><span>{s.name}</span><span>{s.unit}</span></StatLabel>
                    <StatValue $color={s.color}>{s.value}</StatValue>
                    <Ratios>
                      <Ratio>同比<b>{s.yoy}</b></Ratio>
                      <Ratio $up>環比<b>{s.mom}</b></Ratio>
                    </Ratios>
                  </Stat>
                ))}
              </Stats>
            </Card>

            <Card>
              <CardHead>
                <CardTitle>本日能耗趨勢</CardTitle>
                <LegendKey><Dot $color="#fdf02d" />用電量</LegendKey>
                <LegendKey><Dot $color="#35c4dd" />冰水 (RT)</LegendKey>
                <MenuAnchor>
                  <RoundButton aria-label="圖表選單"><Triangle /></RoundButton>
                  <Menu>
                    {['長條圖', '折線圖', '時間調整', '最大值調整'].map((m, i) => (
                      <li key={m}><MenuItem $active={i === 0}>{m}</MenuItem></li>
                    ))}
                  </Menu>
                  <HandPointer />
                </MenuAnchor>
              </CardHead>
              <Trend />
            </Card>

            <Card>
              <CardHead>
                <CardTitle>設備狀態</CardTitle>
                <RateTag>異常率 <b>0%</b></RateTag>
              </CardHead>
              <RingBody $gap="4px">
                <svg width="60" height="60" viewBox="0 0 60 60">
                  <circle cx="30" cy="30" r="19.500" fill="#2a4b67" />
                  <circle cx="30" cy="30" r="28" fill="none" stroke="#3bcbe4" strokeWidth="3" />
                  <text x="30" y="34" textAnchor="middle" fontSize="11" fill="#fff">211<tspan fontSize="9">/211</tspan></text>
                </svg>
                <Legend $end>
                  <LegendRow $value="#43c4dd"><Dot $color="#3bcbe4" /><dt>正常</dt><dd>211</dd><span>台</span></LegendRow>
                  <LegendRow $value="#5b84a9"><Dot $color="#2f5f84" /><dt>異常</dt><dd>0</dd><span>台</span></LegendRow>
                </Legend>
              </RingBody>
            </Card>

            <Card>
              <CardHead><CardTitle>即時告警</CardTitle></CardHead>
              <RingBody $gap="5px">
                <AlertRing />
                <Legend>
                  {ALERTS.map(a => (
                    <LegendRow key={a.name} $value={a.color} $unitGap="10px">
                      <Dot $color={a.color} /><dt>{a.name}</dt><dd>{a.count}</dd><span>台</span>
                    </LegendRow>
                  ))}
                </Legend>
              </RingBody>
            </Card>
          </TopRow>

          <Divider />

          <LowerRow>
            <Viewer>
              <Scene />
              <Tools>
                <ToolGroup>
                  <ToolButton $color="#2fb7f5" aria-label="樓層"><FaLayerGroup size={16} /></ToolButton>
                  <Handle aria-label="收合樓層"><Triangle /></Handle>
                  <FloorPanel>
                    <FloorGrid>
                      {FLOORS.map(f => <FloorButton key={f} $active={f === 'All'}>{f}</FloorButton>)}
                    </FloorGrid>
                    <ScrollTrack><ScrollThumb /></ScrollTrack>
                  </FloorPanel>
                </ToolGroup>
                <ToolGroup>
                  <ToolButton $color="#c3c7ce" aria-label="模型"><CubeIcon /></ToolButton>
                  <Handle aria-label="展開模型"><Triangle down /></Handle>
                </ToolGroup>
              </Tools>
            </Viewer>

            <RightColumn>
              <Card $short>
                <CardHead><CardTitle>BTU 排名</CardTitle><RoundButton aria-label="收合 BTU"><Triangle /></RoundButton></CardHead>
                <BtuList>
                  {BTU.map(b => (
                    <BtuRow key={b.name}>
                      <Track><Fill $color="#fdf02d" style={{ width: `${b.value}%` }} /></Track>
                      {b.name}
                    </BtuRow>
                  ))}
                </BtuList>
              </Card>

              <Card $short>
                <CardHead><CardTitle>空調設備使用率</CardTitle><RoundButton aria-label="收合空調"><Triangle /></RoundButton></CardHead>
                <UsageRow>
                  {[['B4F', 27, 0, 100], ['R1F', 0, 4, 0]].map(([name, on, off, rate]) => (
                    <div key={name}>
                      <UsageInfo>
                        <FloorName>{name}</FloorName>
                        <Counts>
                          <span>運轉</span><span>{on}</span><span>台使用率</span>
                          <span>停機</span><span>{off}</span><span>台</span>
                        </Counts>
                        <Percent>{rate}%</Percent>
                      </UsageInfo>
                      <Track><Fill $color="#35c4dd" style={{ width: `${rate}%` }} /></Track>
                    </div>
                  ))}
                </UsageRow>
              </Card>
            </RightColumn>
          </LowerRow>
        </Main>
      </Body>

      <Player>
        <Seek type="range" min="0" max="808" defaultValue="12" aria-label="播放進度" />
        <Controls>
          <ControlButton $active aria-label="播放"><TransportIcon d="M1 1L17 9L1 17z" /></ControlButton>
          <ControlButton aria-label="暫停"><TransportIcon d="M3 2h5v14H3zM10 2h5v14h-5z" /></ControlButton>
          <ControlButton aria-label="停止"><TransportIcon d="M3 3h12v13H3z" /></ControlButton>
          <Separator />
          <ControlButton aria-label="上一個"><TransportIcon d="M0 4h1.500v10H0zM10 4v10L3 9zM17.500 4v10L10.500 9z" /></ControlButton>
          <ControlButton aria-label="倒轉"><TransportIcon d="M9 4v10L2 9zM16 4v10L9 9z" /></ControlButton>
          <ControlButton aria-label="快轉"><TransportIcon d="M3 4v10L10 9zM10 4v10L17 9z" /></ControlButton>
          <ControlButton aria-label="下一個"><TransportIcon d="M0 4v10L7 9zM8 4v10L15 9zM16 4h1.500v10H16z" /></ControlButton>
          <Separator />
          <ControlButton $wide aria-label="逐格"><TransportIcon d="M2 4h3v10H2zM7 4v10L15 9z" /></ControlButton>
          <Separator />
          <Volume>
            <button aria-label="靜音">
              <svg width="23" height="22" viewBox="0 0 23 22">
                <path d="M0 7h5l8-7v22l-8-6H0z" fill="#000" />
                <path d="M14 8q3 3 0 6M16 5.500q5 5.500 0 11M18.500 3q7 8 0 16" fill="none" stroke="#000" strokeWidth="1.200" />
              </svg>
            </button>
            <VolumeSlider type="range" defaultValue="30" aria-label="音量" />
          </Volume>
        </Controls>
        <StatusBar>
          <svg width="8" height="9" viewBox="0 0 8 9"><path d="M1 0h4l2 2v7H1z" fill="#ddd" /><path d="M2 4l3 2-3 2z" fill="#333" /></svg>
          <span>播放中 [H/W]</span>
          <span>00:12 / 13:28</span>
          <svg width="14" height="8" viewBox="0 0 14 8"><path d="M4 1l3 3 3-3v6L7 4 4 7z" fill="#ddd" /><path d="M1 1h2v6H1M13 1h-2v6h2" fill="none" stroke="#8a9a2c" /></svg>
        </StatusBar>
      </Player>
    </Page>
  )
}

export default App
